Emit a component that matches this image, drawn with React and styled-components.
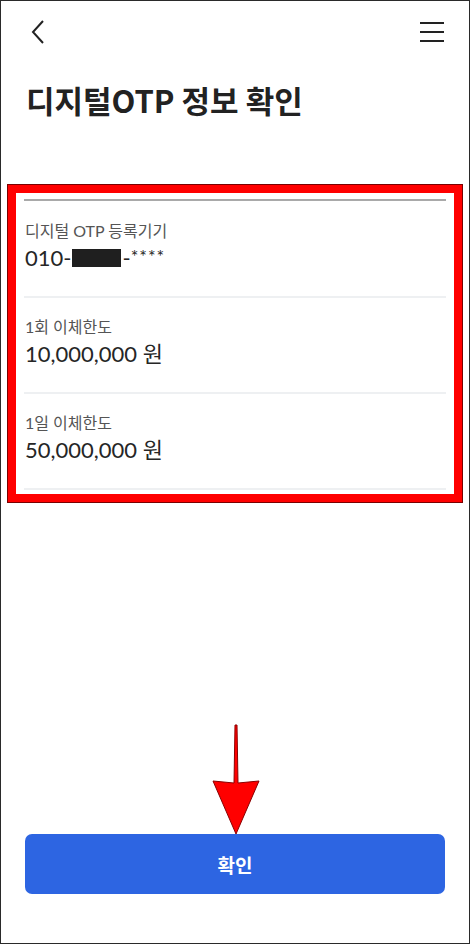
import React from 'react';
import styled, { createGlobalStyle } from 'styled-components';

const Global = createGlobalStyle`
  * { box-sizing: border-box; }
  body {
    margin: 0;
    background: #fff;
    font-family: Lato, "Noto Sans CJK KR", sans-serif;
  }
`;

const Screen = styled.div`
  position: relative;
  width: 470px;
  height: 944px;
  border: 1px solid #2a2a2a;
  display: flex;
  flex-direction: column;
  background: #fff;
`;

const Header = styled.div`
  height: 62px;
  display: flex;
  align-items: center;
  justify-content: space-between;
  padding: 0 24px 0 24px;
`;

const IconBtn = styled.button`
  border: 0;
  background: none;
  padding: 0;
  width: 26px;
  height: 26px;
  display: flex;
  align-items: center;
  justify-content: center;
`;

const Title = styled.h1`
  margin: 17px 0 0 25px;
  font-family: "Noto Sans CJK KR", sans-serif;
  font-weight: 700;
  font-size: 31px;
  line-height: 40px;
  letter-spacing: 0;
  color: #222;
`;

const Highlight = styled.section`
  margin: 65px 7px 0 7px;
  border: 8px solid #ff0000;
  outline: 1px solid #7a0000;
  padding: 6px 8px 4px 8px;
  background: #fff;
`;

const TopRule = styled.div`
  height: 2px;
  background: #a9a9a9;
`;

const Row = styled.div`
  padding: ${p => (p.first ? '20px' : '19px')} 0 25px 1px;
  border-bottom: 2px solid #eef0f2;
`;

const Label = styled.div`
  font-size: 16px;
  line-height: 20px;
  color: #555;
`;

const Value = styled.div`
  margin-top: 4px;
  font-size: 22px;
  line-height: 26px;
  color: #262626;
  display: flex;
  align-items: center;
`;

const Mask = styled.span`
  display: inline-block;
  width: 49px;
  height: 18px;
  background: #1f1f1f;
  margin: 0 1px;
`;

const Stars = styled.span`
  font-size: 18px;
  align-self: flex-start;
  margin-top: -2px;
  letter-spacing: 1px;
`;

const Footer = styled.div`
  margin-top: auto;
  padding: 0 24px 49px 24px;
`;

const Confirm = styled.button`
  width: 100%;
  height: 60px;
  border: 0;
  border-radius: 7px;
  background: #2d65e2;
  color: #fff;
  font-family: "Noto Sans CJK KR", sans-serif;
  font-weight: 700;
  font-size: 19px;
`;

const Arrow = styled.svg`
  position: absolute;
  left: 210px;
  top: 722px;
`;

const rows = [
  { label: '디지털 OTP 등록기기', phone: true },
  { label: '1회 이체한도', value: '10,000,000 원' },
  { label: '1일 이체한도', value: '50,000,000 원' },
];

export default function App() {
  return (
    <>
      <Global />
      <Screen>
        <Header>
          <IconBtn>
            <svg width="16" height="26" viewBox="0 0 16 26">
              <path d="M13 2 L3 13 L13 24" fill="none" stroke="#222" strokeWidth="2" />
            </svg>
          </IconBtn>
          <IconBtn>
            <svg width="26" height="22" viewBox="0 0 26 22">
              <path d="M1 2 H25 M1 11 H25 M1 20 H25" stroke="#222" strokeWidth="2" />
            </svg>
          </IconBtn>
        </Header>
        <Title>디지털OTP 정보 확인</Title>
        <Highlight>
          <TopRule />
          {rows.map((r, i) => (
            <Row key={i} first={i === 0}>
              <Label>{r.label}</Label>
              <Value>
                {r.phone ? (
                  <>
                    010-<Mask />-<Stars>****</Stars>
                  </>
                ) : (
                  r.value
                )}
              </Value>
            </Row>
          ))}
        </Highlight>
        <Footer>
          <Confirm>확인</Confirm>
        </Footer>
        <Arrow width="50" height="114" viewBox="0 0 50 114">
          <path
            d="M24 2 L26 2 L27 60 L48 58 L25 111 L2 58 L23 60 Z"
            fill="#ff0000"
            stroke="#8a0000"
            strokeWidth="1"
            strokeLinejoin="miter"
          />
        </Arrow>
      </Screen>
    </>
  );
}
